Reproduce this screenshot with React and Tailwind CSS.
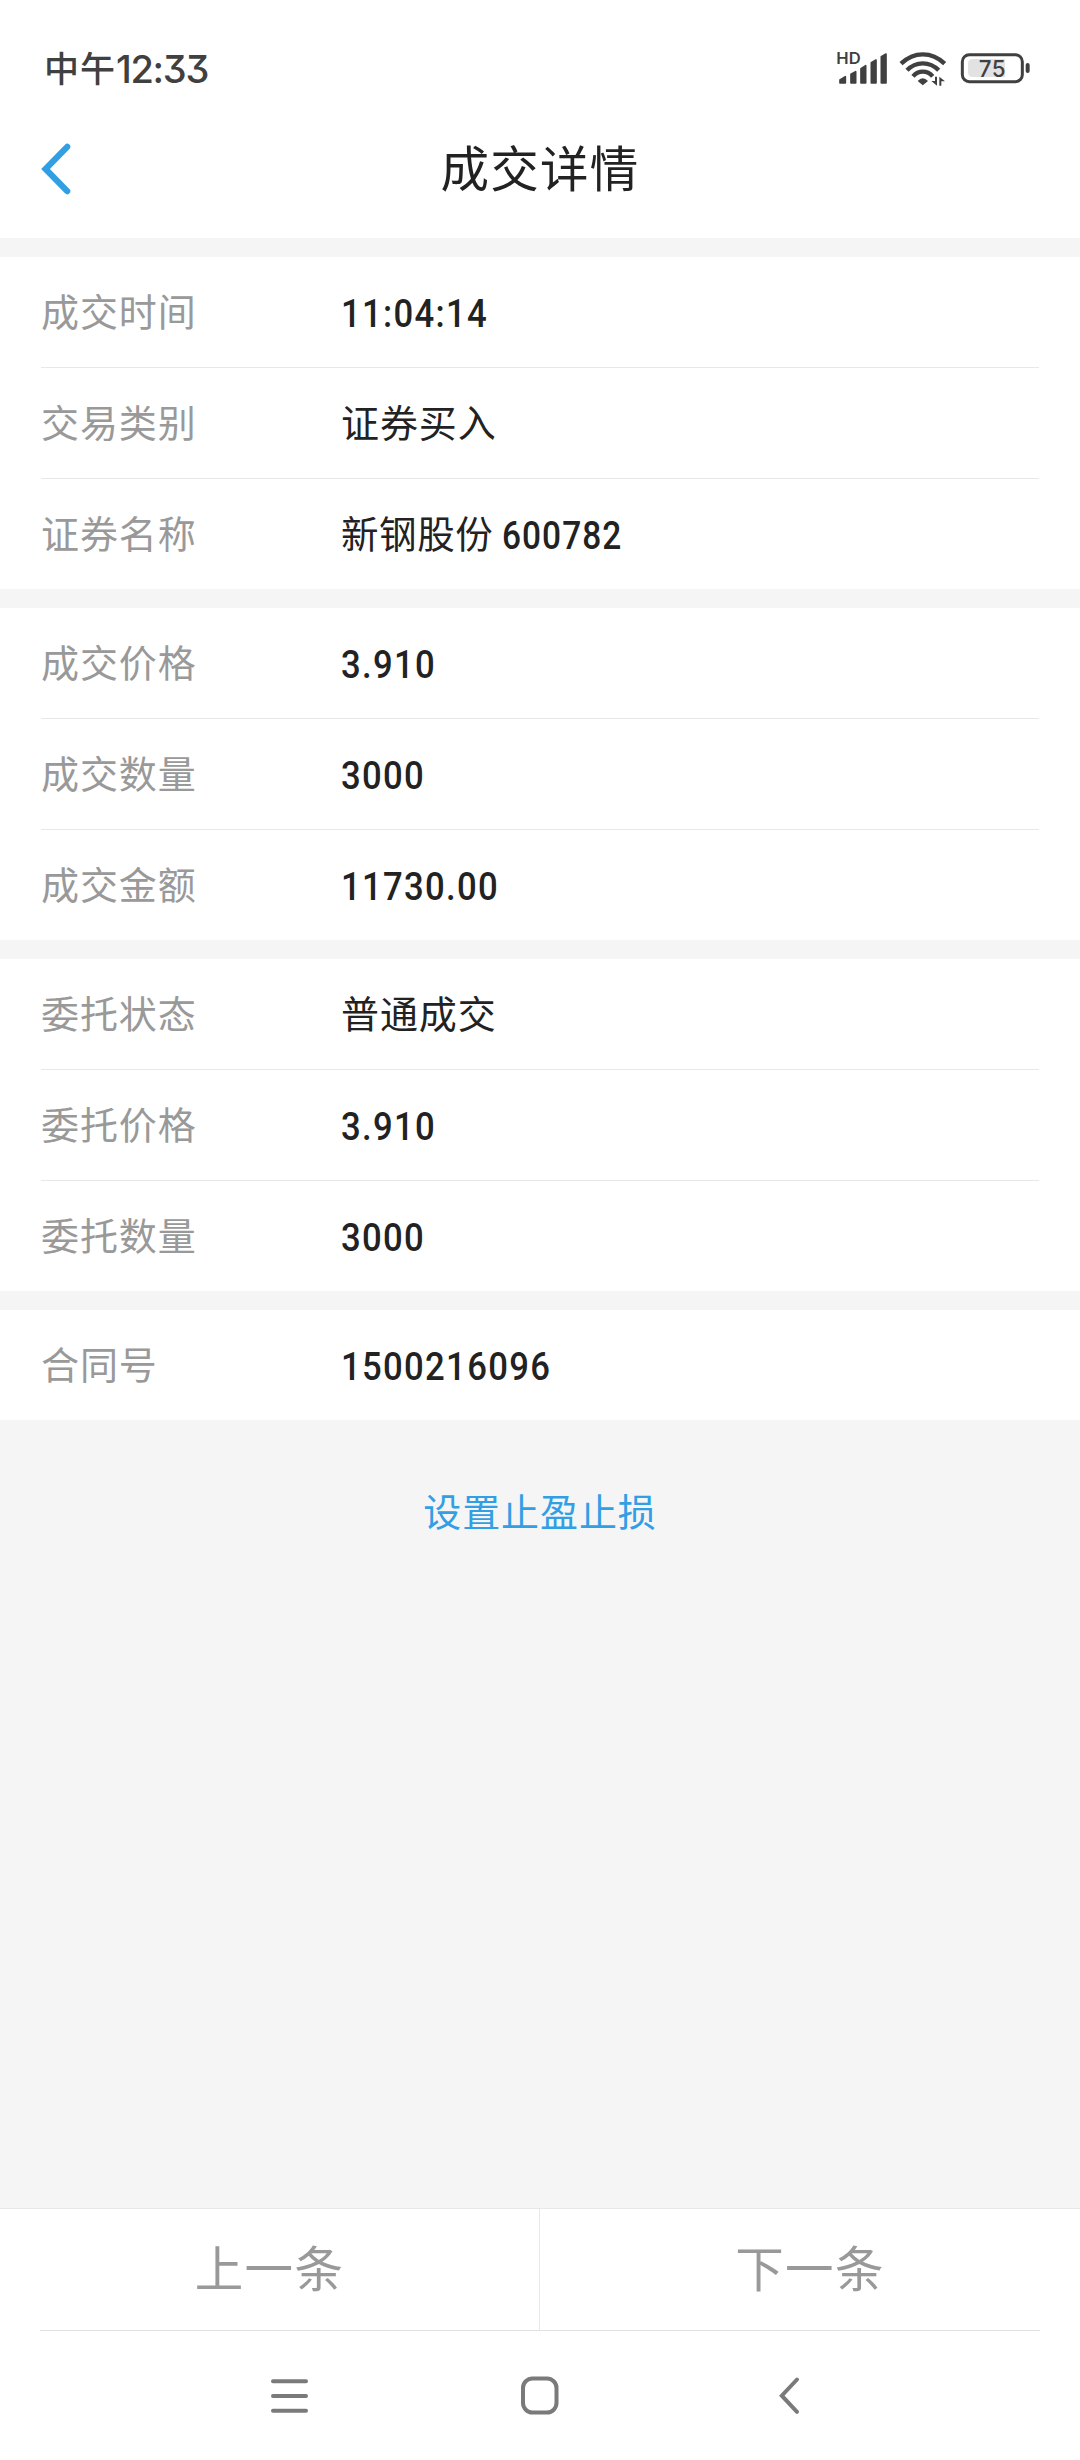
const GROUPS = [
  [
    { label: "成交时间", value: "11:04:14", numeric: true },
    { label: "交易类别", value: "证券买入" },
    { label: "证券名称", value: "新钢股份", code: "600782" },
  ],
  [
    { label: "成交价格", value: "3.910", numeric: true },
    { label: "成交数量", value: "3000", numeric: true },
    { label: "成交金额", value: "11730.00", numeric: true },
  ],
  [
    { label: "委托状态", value: "普通成交" },
    { label: "委托价格", value: "3.910", numeric: true },
    { label: "委托数量", value: "3000", numeric: true },
  ],
  [{ label: "合同号", value: "1500216096", numeric: true }],
]

const StatusIcons = () => (
  <svg width="220" height="60" viewBox="0 0 660 180" fill="none" className="mt-[4px] text-[#404040]">
    {/* Signal */}
    <g fill="currentColor" stroke="currentColor" strokeWidth="5" strokeLinejoin="round">
      <path d="M60 120 L76 110 V129 H60 Z" />
      <path d="M93 103 L107 95 V129 H93 Z" />
      <path d="M123 86 L137 77 V129 H123 Z" />
      <path d="M154 68 L168 60 V129 H154 Z" />
      <path d="M184 50 L198 42 V129 H184 Z" />
    </g>
    <text x="49" y="72" fill="currentColor" fontSize="48" fontWeight="600" fontFamily="Inter, sans-serif" textLength="73" lengthAdjust="spacingAndGlyphs">
      HD
    </text>

    {/* Wifi */}
    <g stroke="currentColor" strokeWidth="13">
      <path d="M243 71 Q272 43 308.500 43 Q345 43 374 71" />
      <path d="M261 91 Q281 70 308.500 70 Q336 70 356 91" />
      <path d="M279 109 Q291 95 308.500 95 Q326 95 338 109" />
    </g>
    <path d="M293 123 Q308 107 324 123 L308.500 136 Z" fill="currentColor" />
    <path d="M351 110 V137 L334 123 H345 V110 Z M358 137 V110 L375 124 H364 V137 Z" fill="currentColor" />

    {/* Battery */}
    <rect x="427" y="44" width="180" height="81" rx="21" stroke="currentColor" strokeWidth="9" />
    <path d="M458 57 H555 V111 H458 Q444 111 444 97 V71 Q444 57 458 57 Z" fill="#e2e2e2" />
    <rect x="617" y="69" width="12" height="30" rx="6" fill="currentColor" />
    <text x="476" y="110" fill="currentColor" fontSize="67" fontWeight="500" fontFamily="Inter, sans-serif" textLength="81">
      75
    </text>
  </svg>
)

const StatusBar = () => (
  <div className="h-[116px] pt-[20px] pl-[44px] pr-[40px] flex items-center justify-between text-[#404040]">
    <div className="flex items-center font-medium">
      <span className="text-[35px] leading-none tracking-[1px] pb-[4px]">中午</span>
      <span className="font-['Inter'] text-[38px] leading-none tracking-[-1.3px] pt-[2px] [font-feature-settings:'cv09']">12:33</span>
    </div>
    <StatusIcons />
  </div>
)

const TitleBar = () => (
  <div className="h-[106px] grid grid-cols-[1fr_auto_1fr] items-center">
    <button type="button" className="pl-[40px]" aria-label="返回">
      <svg width="32" height="54" viewBox="0 0 32 54" fill="none" stroke="#329fe5" strokeWidth="6.2" strokeLinecap="round">
        <path d="M27.200 4.800 L5.500 27 L27.200 49.200" />
      </svg>
    </button>
    <h1 className="text-[48.5px] leading-none tracking-[1.2px] pb-[6px] text-[#222]">成交详情</h1>
  </div>
)

const Digits = ({ children }) => (
  <span className="inline-block origin-left scale-x-[0.88] font-['Roboto'] font-medium text-[39.4px] leading-none tracking-[1.5px] pt-[4px]">
    {children}
  </span>
)

const Row = ({ label, value, code, numeric }) => (
  <div className="h-[110px] flex items-center text-[38px] leading-none tracking-[0.9px]">
    <span className="w-[300px] pb-[5px] text-[#999]">{label}</span>
    {numeric && <Digits>{value}</Digits>}
    {!numeric && !code && <span className="pb-[5px]">{value}</span>}
    {code && (
      <span className="flex items-center gap-[9px] text-[37.5px] tracking-[0.6px]">
        <span className="pb-[5px]">{value}</span>
        <span className="inline-block origin-left scale-x-[0.88] font-['Roboto'] font-medium text-[38px] tracking-[1.2px] pt-[3px]">
          {code}
        </span>
      </span>
    )}
  </div>
)

const BottomNav = () => (
  <div className="h-[129px] flex justify-center items-center text-[#7a7a7a]">
    <svg width="540" height="44" viewBox="0 0 540 44" fill="none" stroke="currentColor" strokeWidth="4" strokeLinecap="round">
      <path d="M3 7.300 H36 M3 22 H36 M3 36.700 H36" />
      <rect x="253" y="4.500" width="33.500" height="34" rx="9.500" />
      <path d="M527 5.500 L511.800 21.700 L527 37.900" />
    </svg>
  </div>
)

const App = () => {
  return (
    <div className="w-[1080px] h-[2460px] flex flex-col bg-[#f5f5f5] text-[#222] font-['Noto_Sans_CJK_SC',sans-serif]">
      <header className="h-[238px] bg-white">
        <StatusBar />
        <TitleBar />
      </header>

      <main className="flex-1 pt-[19px] flex flex-col gap-[19px]">
        {GROUPS.map((rows) => (
          <section key={rows[0].label} className="bg-white px-[41px] divide-y divide-[#e8e8e8]">
            {rows.map((row) => (
              <div key={row.label}>
                <Row {...row} />
              </div>
            ))}
          </section>
        ))}
        <button type="button" className="mt-[51px] self-center text-[38px] leading-[40px] tracking-[0.9px] text-[#329fe5]">
          设置止盈止损
        </button>
      </main>

      <footer className="bg-white border-t border-[#e8e8e8]">
        <div className="h-[121px] grid grid-cols-[539px_1fr] text-[48.5px] leading-none tracking-[1.3px] text-[#999]">
          <button type="button" className="pb-[6px]">上一条</button>
          <button type="button" className="pb-[6px] border-l border-[#e8e8e8]">下一条</button>
        </div>
        <div className="mx-[40px] h-px bg-[#e2e2e2]" />
        <BottomNav />
      </footer>
    </div>
  )
}

export default App
